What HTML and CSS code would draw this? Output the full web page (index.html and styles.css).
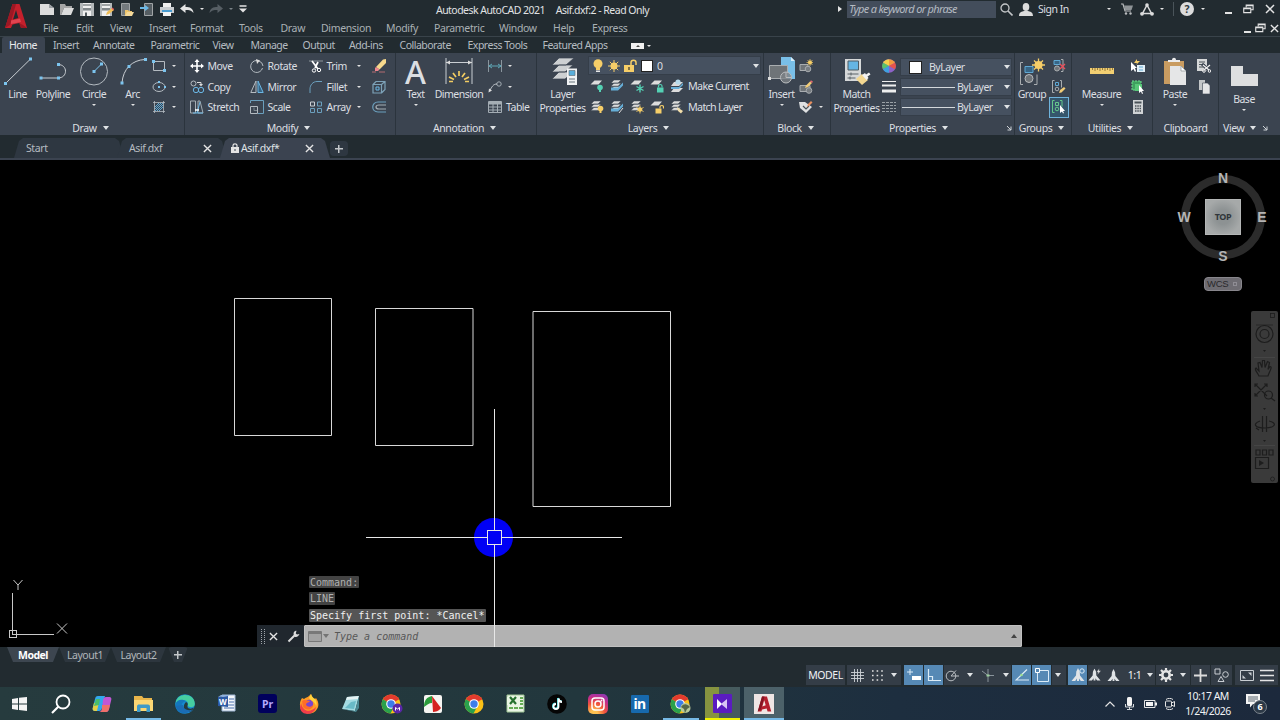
FILE: index.html
```html
<!DOCTYPE html>
<html lang="en">
<head>
    <meta charset="UTF-8">
    <meta name="viewport" content="width=device-width, initial-scale=1.0">
    <title>Autodesk AutoCAD 2021</title>
    <link rel="stylesheet" href="styles.css">
</head>
<body>
    <!-- shared icons -->
    <svg class="defs" width="0" height="0">
        <symbol id="layers" viewBox="0 0 14 14">
            <path d="M4 1h7L8 4H1zM4 4.200h7L8 7.200H1zM4 7.400h7L8 10.400H1z" fill="#dcdcdc" stroke="#3b4450" stroke-width=".5"/>
        </symbol>
        <symbol id="sheet" viewBox="0 0 14 14">
            <path d="M4.500 1.500H12L8.500 5.500H.5z" fill="#dcdcdc"/>
        </symbol>
        <symbol id="chrome" viewBox="0 0 20 20">
            <circle cx="10" cy="10" r="9.500" fill="#fbc116"/>
            <path d="M10 10L1.800 5.250A9.500 9.500 0 0 1 18.200 5.250z" fill="#e33b2e"/>
            <path d="M10 10L1.800 5.250A9.500 9.500 0 0 0 9.500 19.500L13.500 12z" fill="#2aa14c"/>
            <path d="M10 5.250H18.200L17 3.800H5z" fill="#e33b2e"/>
            <circle cx="10" cy="10" r="4.800" fill="#fff"/>
            <circle cx="10" cy="10" r="3.700" fill="#3d7de8"/>
        </symbol>
        <symbol id="scale" viewBox="0 0 14 14">
            <path d="M7 0l1.700 3.500.3 4L13.500 13H9.800L8 10.500V13H6v-2.500L4.200 13H.5L5 7.500l.3-4z" fill="#dfe3e6"/>
        </symbol>
        <symbol id="restore" viewBox="0 0 12 10">
            <path d="M3.500 3V.8h7.500v5H8.700M.8 4h7.700v5H.8z" fill="none" stroke="#e4e4e4" stroke-width="1.200"/>
            <path d="M1 4.600h7.500M4 1.300h7" stroke="#e4e4e4" stroke-width="1.200"/>
        </symbol>
        <symbol id="close" viewBox="0 0 10 10">
            <path d="M1 1l8 8M9 1L1 9" stroke="#e4e4e4" stroke-width="1.500"/>
        </symbol>
        <symbol id="launcher" viewBox="0 0 6 6">
            <path d="M1 1l4 4M5 1.500V5H1.500" fill="none" stroke="#d0d4d8"/>
        </symbol>
    </svg>

    <header class="header">
        <svg class="logo" width="22" height="26" viewBox="0 0 22 26">
            <path d="M7.500 1h7L22 25h-6l-1.500-5-7 1.500L6 25H0z" fill="#c5202c"/>
            <path d="M11 7l2.300 8L8 16.500z" fill="#222b30"/>
            <path d="M0 25L7.500 1H11L5 22zM14 20l4 2 4 3h-6z" fill="#9c1824"/>
            <path d="M6 17.500l9-2 1 3.500-10 2z" fill="#e04450"/>
        </svg>
        <div class="header-main">
            <div class="titlebar">
                <div class="quick">
                    <svg width="14" height="12" viewBox="0 0 14 12"><path d="M0 1h9l5 4v7H0z" fill="#dcdcdc"/><path d="M9 1v4h5" fill="#9a9ea2"/></svg>
                    <svg width="14" height="12" viewBox="0 0 14 12"><path d="M0 1h5l1 2h6v2H4l-3 7H0z" fill="#a6a6a6"/><path d="M4 5h10l-3 7H1z" fill="#dcdcdc"/></svg>
                    <svg width="14" height="13" viewBox="0 0 14 13"><path d="M0 0h14v13H0z" fill="#b4b8ba"/><path d="M3 0h8v5H3zM3 8h8v5H3z" fill="#f0f0f0"/><path d="M3 2h8M3 6h8" stroke="#50585c"/><path d="M5 9.500h2V13H5z" fill="#50585c"/></svg>
                    <svg width="14" height="13" viewBox="0 0 14 13"><path d="M0 0h12v13H0z" fill="#b4b8ba"/><path d="M2 0h8v5H2zM2 8h8v5H2z" fill="#f0f0f0"/><path d="M2 6h8M2 2h8" stroke="#50585c"/><path d="M6 12l1-3 5-4 2 2-5 4z" fill="#f0bf59"/><path d="M12 5l2 2" stroke="#d85d60" stroke-width="1.500"/></svg>
                    <svg width="14" height="13" viewBox="0 0 14 13"><path d="M1.500.5h8v12h-8z" fill="#747a7e" stroke="#a0a4a6"/><path d="M5 7h3l1 1h3v5H5z" fill="#edc46b"/><path d="M7 9h7l-2 4H5z" fill="#f4d99a"/></svg>
                    <svg width="14" height="13" viewBox="0 0 14 13"><path d="M4.500.5h8v12h-8z" fill="#555d62" stroke="#a0a4a6"/><path d="M0 4h5V2l4 3-4 3V6H0z" fill="#6bb7e5"/></svg>
                    <svg width="14" height="13" viewBox="0 0 14 13"><path d="M3 0h8v5H3z" fill="#f0f0f0"/><path d="M0 4h14v6H0z" fill="#c9cdd0"/><path d="M2 7h10v2H2z" fill="#4a9cd0"/><path d="M3 9h8v4H3z" fill="#f4f4f4"/></svg>
                    <svg width="14" height="10" viewBox="0 0 14 10"><path d="M0 4.500L5.500 0v3c4.500 0 7.500 1 8 6-2-2.500-4-3-8-3v3z" fill="#e4e4e4"/></svg>
                    <i class="caret"></i>
                    <svg width="14" height="10" viewBox="0 0 14 10"><path d="M14 4.500L8.500 0v3C4 3 1 4 .5 9c2-2.500 4-3 8-3v3z" fill="#565e64"/></svg>
                    <i class="caret dim"></i>
                    <svg width="8" height="8" viewBox="0 0 8 8"><path d="M.5 1h7" stroke="#e4e4e4" stroke-width="1.500"/><path d="M0 3.500h8L4 7.500z" fill="#e4e4e4"/></svg>
                </div>
                <div class="doc-title"><span>Autodesk AutoCAD 2021</span><span>Asif.dxf:2 - Read Only</span></div>
                <i class="arrow-right"></i>
                <div class="search">Type a keyword or phrase</div>
                <div class="account">
                    <svg width="13" height="13" viewBox="0 0 13 13"><circle cx="5" cy="5" r="4" fill="none" stroke="#c3c6c8" stroke-width="1.300"/><path d="M8 8l4.500 4.500" stroke="#c3c6c8" stroke-width="1.600"/></svg>
                    <svg width="14" height="13" viewBox="0 0 14 13"><ellipse cx="7" cy="4" rx="3.300" ry="4" fill="#dcdcdc"/><path d="M0 13c0-4 3-4.500 5-5h4c2 .5 5 1 5 5z" fill="#dcdcdc"/></svg>
                    <span>Sign In</span>
                </div>
                <div class="services">
                    <i class="caret"></i>
                    <svg width="12" height="12" viewBox="0 0 12 12"><path d="M0 1h2l2 7h6" fill="none" stroke="#b9bcbe" stroke-width="1.200"/><path d="M3 2.500h9L10.500 7H4z" fill="#8e9396"/><circle cx="5" cy="10.500" r="1.200" fill="#b9bcbe"/><circle cx="9.500" cy="10.500" r="1.200" fill="#b9bcbe"/></svg>
                    <svg width="14" height="13" viewBox="0 0 14 13"><path d="M7 2L2.500 10.500h9zM7 2l4.500 8.500" fill="none" stroke="#dcdcdc" stroke-width="1.500"/><circle cx="7" cy="2" r="1.800" fill="#dcdcdc"/><circle cx="2" cy="10.800" r="1.900" fill="#dcdcdc"/><circle cx="12" cy="10.800" r="1.900" fill="#dcdcdc"/></svg>
                    <i class="caret"></i>
                    <span class="vline"></span>
                    <span class="help">?</span>
                    <i class="caret"></i>
                </div>
                <div class="window-buttons">
                    <i class="minimize"></i>
                    <svg width="11" height="10"><use href="#restore"/></svg>
                    <svg width="10" height="10"><use href="#close"/></svg>
                </div>
            </div>
            <div class="menubar">
                <nav class="menu">
                    <span>File</span><span>Edit</span><span>View</span><span>Insert</span><span>Format</span><span>Tools</span><span>Draw</span><span>Dimension</span><span>Modify</span><span>Parametric</span><span>Window</span><span>Help</span><span>Express</span>
                </nav>
                <div class="doc-buttons">
                    <i class="minimize"></i>
                    <svg width="11" height="10"><use href="#restore"/></svg>
                    <svg width="9" height="9"><use href="#close"/></svg>
                </div>
            </div>
        </div>
    </header>

    <nav class="ribbon-tabs">
        <span class="active">Home</span><span>Insert</span><span>Annotate</span><span>Parametric</span><span>View</span><span>Manage</span><span>Output</span><span>Add-ins</span><span>Collaborate</span><span>Express Tools</span><span>Featured Apps</span>
        <div class="ribbon-toggle"><b><i class="caret up"></i></b><i class="caret"></i></div>
    </nav>

    <main class="ribbon">
        <section class="panel draw">
            <div class="panel-body">
                <div class="big">
                    <svg width="30" height="30" viewBox="0 0 30 30"><path d="M2.500 26.500L27.500 2" stroke="#c9ced3"/><path d="M1 25h3v3H1zM26 .5h3v3h-3z" fill="#7cc4ee"/></svg>
                    <label>Line</label>
                </div>
                <div class="big">
                    <svg width="30" height="30" viewBox="0 0 30 30"><path d="M3 21h17c10 0 10-13.500 0-13.500" fill="none" stroke="#c9ced3"/><path d="M1.500 19.500h3v3h-3zM19 19.500h3v3h-3zM19 6h3v3h-3z" fill="#7cc4ee"/></svg>
                    <label>Polyline</label>
                </div>
                <div class="big">
                    <svg width="30" height="30" viewBox="0 0 30 30"><circle cx="15" cy="14.500" r="13.500" fill="none" stroke="#b4bbc1"/><path d="M15 14.500l7.500-7.500" stroke="#7cc4ee"/><path d="M13.500 13h3v3h-3zM21 5.500h3v3h-3z" fill="#7cc4ee"/></svg>
                    <label>Circle</label><i class="caret"></i>
                </div>
                <div class="big">
                    <svg width="30" height="30" viewBox="0 0 30 30"><path d="M4 26C5 12 14 3 27 2.500" fill="none" stroke="#c9ced3"/><path d="M2.500 24.500h3v3h-3zM9.500 8h3v3h-3zM26 1h3v3h-3z" fill="#7cc4ee"/></svg>
                    <label>Arc</label><i class="caret"></i>
                </div>
                <div class="small-col">
                    <div class="cmd"><svg width="14" height="12" viewBox="0 0 14 12"><path d="M1.500 1.500h11v9h-11z" fill="none" stroke="#b4bbc1"/><path d="M0 0h3v3H0zM11 9h3v3h-3z" fill="#7cc4ee"/></svg><i class="caret"></i></div>
                    <div class="cmd"><svg width="14" height="12" viewBox="0 0 14 12"><ellipse cx="7" cy="6" rx="6" ry="4.500" fill="none" stroke="#b4bbc1"/><path d="M6 5h2v2H6zM6 0h2v2H6zM12 5h2v2h-2z" fill="#7cc4ee"/></svg><i class="caret"></i></div>
                    <div class="cmd"><svg width="14" height="14" viewBox="0 0 14 14"><path d="M2.500 1v12M11.500 1v12M1 2.500h12M1 11.500h12" stroke="#b4bbc1" stroke-width=".8"/><path d="M3 7l4-4M3 11l8-8M7 11l4-4M3 9l6-6M5 11l6-6" stroke="#5fa9d4"/></svg><i class="caret"></i></div>
                </div>
            </div>
            <div class="panel-title">Draw<i class="tri"></i></div>
        </section>

        <section class="panel modify">
            <div class="panel-body">
                <div class="small-col">
                    <div class="cmd"><svg width="14" height="14" viewBox="0 0 14 14"><path d="M7 1v12M1 7h12" stroke="#fff" stroke-width="1.600"/><path d="M7 0l2.500 3h-5zM7 14l2.500-3h-5zM0 7l3-2.500v5zM14 7l-3-2.500v5z" fill="#fff"/></svg>Move</div>
                    <div class="cmd"><svg width="14" height="14" viewBox="0 0 14 14"><circle cx="3.500" cy="3.500" r="2.500" fill="none" stroke="#b4bbc1"/><path d="M7 2.500h4v2" fill="none" stroke="#dcdcdc"/><path d="M9 4h4l-2 2.500z" fill="#dcdcdc"/><circle cx="6" cy="10" r="2.700" fill="none" stroke="#6bb7e5"/><circle cx="11" cy="10" r="2.700" fill="none" stroke="#6bb7e5"/></svg>Copy</div>
                    <div class="cmd"><svg width="14" height="14" viewBox="0 0 14 14"><path d="M.5 1h5v12h-5zM8 13V1h2l3 12z" fill="none" stroke="#a4adb4"/><path d="M3 13h10M7 13L10 2" stroke="#6bb7e5"/><path d="M5 10h4" stroke="#fff" stroke-width="1.500"/></svg>Stretch</div>
                </div>
                <div class="small-col">
                    <div class="cmd"><svg width="14" height="14" viewBox="0 0 14 14"><path d="M7 1.500a6 6 0 1 0 5.500 7.500M9 2a6 6 0 0 1 4 5" fill="none" stroke="#b4bbc1"/><path d="M6 0l4 1.500L7 5z" fill="#dcdcdc"/></svg>Rotate</div>
                    <div class="cmd"><svg width="14" height="14" viewBox="0 0 14 14"><path d="M6 1v11.500H.8z" fill="none" stroke="#b4bbc1"/><path d="M8 1v11.500h5.200z" fill="#386585" stroke="#6bb7e5"/></svg>Mirror</div>
                    <div class="cmd"><svg width="14" height="14" viewBox="0 0 14 14"><path d="M.5 3V.5h13v13H8" fill="none" stroke="#6b9fbd"/><path d="M.5 6.500h7v7h-7z" fill="none" stroke="#b4bbc1"/><path d="M4 7.500v3h3" fill="none" stroke="#7d8890"/></svg>Scale</div>
                </div>
                <div class="small-col wide">
                    <div class="cmd"><svg width="14" height="14" viewBox="0 0 14 14"><path d="M0 2h14" stroke="#8d959b"/><path d="M3 2l6 8M9 3l-3 6" stroke="#fff" stroke-width="1.700"/><circle cx="5" cy="11.500" r="1.700" fill="none" stroke="#fff"/><circle cx="10" cy="11" r="1.700" fill="none" stroke="#fff"/></svg>Trim<i class="caret"></i></div>
                    <div class="cmd"><svg width="14" height="14" viewBox="0 0 14 14"><path d="M1 13V9c0-4 3-7.500 7-7.500h5" fill="none" stroke="#6b9fbd"/></svg>Fillet<i class="caret"></i></div>
                    <div class="cmd"><svg width="14" height="14" viewBox="0 0 14 14"><path d="M8.500 2h4v4h-4zM1.500 8.500h4v4h-4zM8.500 8.500h4v4h-4z" fill="none" stroke="#6b9fbd"/><path d="M1.500 2h4v4h-4z" fill="none" stroke="#c9ced3"/></svg>Array<i class="caret"></i></div>
                </div>
                <div class="small-col">
                    <div class="cmd"><svg width="14" height="14" viewBox="0 0 14 14"><path d="M4 8l7-7.500L14 0v4L7.500 10.500z" fill="#f7d98c"/><path d="M4 8l3.500 2.500L6 12H3V9z" fill="#ef8790"/><path d="M0 13h4M7 13h6" stroke="#b36a70"/></svg></div>
                    <div class="cmd"><svg width="14" height="14" viewBox="0 0 14 14"><path d="M1 4.500h8.500V13H1zM1 4.500l3-3h9v8L9.500 13M9.500 4.500l3.500-3" fill="none" stroke="#7da2b8" stroke-width="1.200"/><path d="M4 7h3v3H4z" fill="none" stroke="#6bb7e5"/></svg></div>
                    <div class="cmd"><svg width="14" height="12" viewBox="0 0 14 12"><path d="M14 1H6C-1 1-1 11 6 11h8" fill="none" stroke="#6b9fbd" stroke-width="1.200"/><path d="M14 4H7C3 4 3 8 7 8h7" fill="none" stroke="#a4adb4" stroke-width="1.200"/></svg></div>
                </div>
            </div>
            <div class="panel-title">Modify<i class="tri"></i></div>
        </section>

        <section class="panel annotation">
            <div class="panel-body">
                <div class="big"><span class="glyph">A</span><label>Text</label><i class="caret"></i></div>
                <div class="big">
                    <svg width="30" height="30" viewBox="0 0 30 30"><path d="M2 1v26M28 1v26M2 5.500h26" stroke="#c9ced3"/><path d="M2 5.500l4-2v4zM28 5.500l-4-2v4z" fill="#dcdcdc"/><path d="M15 14v5M9 16l3 4M21 16l-3 4M5 20l5 2.500M25 20l-5 2.500M5 24.500h4M21 24.500h4" stroke="#f2cc62" stroke-width="1.700"/></svg>
                    <label>Dimension</label>
                </div>
                <div class="small-col">
                    <div class="cmd"><svg width="14" height="12" viewBox="0 0 14 12"><path d="M.5 0v12M13.500 0v12" stroke="#8a969e"/><path d="M1 6h12M4 4L1 6l3 2M10 4l3 2-3 2" fill="none" stroke="#5fa9b8"/></svg><i class="caret"></i></div>
                    <div class="cmd"><svg width="14" height="12" viewBox="0 0 14 12"><circle cx="11" cy="3" r="2.200" fill="none" stroke="#a4adb4"/><path d="M9 3C5 3 4 6 2 9" fill="none" stroke="#c9ced3"/><path d="M.5 11.500l.5-4 3 2z" fill="#dcdcdc"/></svg><i class="caret"></i></div>
                    <div class="cmd"><svg width="14" height="12" viewBox="0 0 14 12"><path d="M.5.5h13v11H.5zM.5 3h13M.5 6h13M.5 9h13M5 3v8.500M9.500 3v8.500" fill="none" stroke="#a4adb4"/><path d="M1 1h12v2H1z" fill="#a4adb4"/></svg>Table</div>
                </div>
            </div>
            <div class="panel-title">Annotation<i class="tri"></i></div>
        </section>

        <section class="panel layer">
            <div class="panel-body">
                <div class="big">
                    <svg width="30" height="30" viewBox="0 0 30 30"><path d="M11 1h15l-8 7H4zM11 8h14l-8 7H4zM11 15h14l-8 7H4z" fill="#cdd0d2" stroke="#3b4450" stroke-width=".7"/><path d="M19 11.500h10V28H19z" fill="#f0f2f3"/><path d="M21 13.500h6v5h-6z" fill="#58aeda" stroke="#66747c" stroke-width=".7"/><path d="M21 22h6M21 25h6" stroke="#66747c"/></svg>
                    <label>Layer<br>Properties</label>
                </div>
                <div class="layer-tools">
                    <div class="combo layer-combo">
                        <svg width="10" height="14" viewBox="0 0 10 14"><circle cx="5" cy="4.800" r="4.500" fill="#f6ce68"/><path d="M3 9h4v2H3z" fill="#f6ce68"/><path d="M3 11.500h4V13H3z" fill="#e8e8e8"/></svg>
                        <svg width="14" height="14" viewBox="0 0 14 14"><circle cx="7" cy="7" r="3.500" fill="#f6ce68"/><path d="M7 1v12M1 7h12M2.800 2.800l8.400 8.400M11.200 2.800l-8.400 8.400" stroke="#f6ce68"/></svg>
                        <svg width="13" height="14" viewBox="0 0 13 14"><path d="M0 6h10v7H0z" fill="#f6ce68"/><path d="M7 6V3.500C7 .5 12 .5 12 3.500V6" fill="none" stroke="#f6ce68" stroke-width="1.500"/><path d="M5 8v3" stroke="#5a5034" stroke-width="1.500"/></svg>
                        <b class="swatch"></b><span>0</span><i class="tri"></i>
                    </div>
                    <div class="layer-row">
                        <svg width="14" height="14" viewBox="0 0 14 14"><use href="#sheet"/><circle cx="10" cy="8.500" r="2.800" fill="#54d1b4"/><path d="M9 11h2v2H9z" fill="#54d1b4"/></svg>
                        <svg width="14" height="14" viewBox="0 0 14 14"><use href="#layers"/><path d="M1 8.500h7l5-5v3l-5 5H1z" fill="#67afd8"/></svg>
                        <svg width="14" height="14" viewBox="0 0 14 14"><use href="#sheet"/><path d="M10 5.500v8M6.500 7.500l7 4M13.500 7.500l-7 4" stroke="#54d1b4" stroke-width="1.400"/></svg>
                        <svg width="14" height="14" viewBox="0 0 14 14"><use href="#sheet"/><path d="M7 8.500h6.500v5H7z" fill="#54d1b4"/><path d="M8.500 8.500V7c0-2 3.500-2 3.500 0v1.500" fill="none" stroke="#54d1b4" stroke-width="1.200"/></svg>
                        <svg width="14" height="14" viewBox="0 0 14 14"><path d="M4 3h9L9 7H1zM4 9h9l-4 4H1z" fill="#dcdcdc"/><path d="M1 8h8l4-4v2L9 10H1z" fill="#67afd8"/><circle cx="8" cy="3" r="2.600" fill="#b7dced"/></svg>
                        <span>Make Current</span>
                    </div>
                    <div class="layer-row">
                        <svg width="14" height="14" viewBox="0 0 14 14"><use href="#layers"/><circle cx="10.500" cy="8.500" r="2.800" fill="#f6ce68"/><path d="M9.500 11h2v2h-2z" fill="#f6ce68"/></svg>
                        <svg width="14" height="14" viewBox="0 0 14 14"><use href="#layers"/><path d="M1 8.500h7l5-5v3l-5 5H1z" fill="#67afd8"/><path d="M9 13l4-5" stroke="#dcdcdc"/></svg>
                        <svg width="14" height="14" viewBox="0 0 14 14"><use href="#layers"/><circle cx="10" cy="9.500" r="2.200" fill="#f6ce68"/><path d="M10 5.500v8M6.500 7.500l7 4M13.500 7.500l-7 4" stroke="#f6ce68" stroke-width=".9"/></svg>
                        <svg width="14" height="14" viewBox="0 0 14 14"><use href="#sheet"/><path d="M5.500 8.500h6v5h-6z" fill="#f6ce68"/><path d="M10 8.500V7c0-2 3.500-2 3.500 0v1.500" fill="none" stroke="#f6ce68" stroke-width="1.200"/></svg>
                        <svg width="14" height="14" viewBox="0 0 14 14"><use href="#layers"/><path d="M7 7l6 4-2 2.500L8 11z" fill="#f3dfaa"/></svg>
                        <span>Match Layer</span>
                    </div>
                </div>
            </div>
            <div class="panel-title">Layers<i class="tri"></i></div>
        </section>

        <section class="panel block">
            <div class="panel-body">
                <div class="big">
                    <svg width="30" height="30" viewBox="0 0 30 30"><path d="M14 0h10l4 4v18H14z" fill="#79bfe8"/><path d="M24 0v4h4z" fill="#d9eefa"/><path d="M2.500 8.500h18v13h-18z" fill="#6f7478" stroke="#a9adb0"/><circle cx="19" cy="20.500" r="5.500" fill="#7d8286" fill-opacity=".8" stroke="#b9bcbe"/><path d="M19 15v5.500h5.500" fill="none" stroke="#b9bcbe"/><path d="M1 20h3v3H1z" fill="#dcdcdc"/></svg>
                    <label>Insert</label><i class="caret"></i>
                </div>
                <div class="small-col">
                    <div class="cmd"><svg width="14" height="14" viewBox="0 0 14 14"><path d="M1 5.500h8v6H1z" fill="#6f7478" stroke="#a9adb0"/><circle cx="9" cy="10" r="2.800" fill="#777c80" stroke="#a9adb0"/><circle cx="11" cy="3.500" r="2" fill="#f6ce68"/><path d="M11 0v7M7.500 3.500h7M8.500 1l5 5M13.500 1l-5 5" stroke="#f6ce68" stroke-width=".7"/></svg></div>
                    <div class="cmd"><svg width="14" height="14" viewBox="0 0 14 14"><path d="M1 5.500h10v6H1z" fill="#6f7478" stroke="#a9adb0"/><circle cx="10" cy="10.500" r="2.800" fill="#777c80" stroke="#a9adb0"/><path d="M6 8l1-2.500L11 1.500l2 1.500-4 4z" fill="#f2cc76"/><path d="M11 1.500l1-1.200 2 1.500L13 3z" fill="#e06a70"/></svg></div>
                    <div class="cmd"><svg width="14" height="14" viewBox="0 0 14 14"><path d="M0 2h6l7 5-6 6-6-5z" fill="#dfe1e2"/><path d="M4 6l3 3 3-3" fill="none" stroke="#4a5258" stroke-width="1.200"/><path d="M8 7l1-3 3-3 1.500 1.500-3 3z" fill="#e89060"/></svg><i class="caret"></i></div>
                </div>
            </div>
            <div class="panel-title">Block<i class="tri"></i></div>
        </section>

        <section class="panel props">
            <div class="panel-body">
                <div class="big">
                    <svg width="30" height="30" viewBox="0 0 30 30"><path d="M3 2h16v22H3z" fill="#d6d8d9"/><path d="M6 4h10.500v9H6z" fill="#65b5e3" stroke="#4f5c64"/><path d="M5.500 17h11M5.500 21h8M9 15.500v3M8 19.500v3" stroke="#5a6268"/><path d="M14 22l6-5 6 6-6 5z" fill="#f3d791"/><path d="M20 18l3-2 1 1.500 3-2 1.500 2-3 2 1 1.500-2 2z" fill="#f2f2f2"/></svg>
                    <label>Match<br>Properties</label>
                </div>
                <div class="small-col">
                    <div class="cmd"><svg width="14" height="14" viewBox="0 0 14 14"><circle cx="7" cy="7" r="6.800" fill="#8d63c8"/><path d="M7 7V.2a6.800 6.800 0 0 1 6 3.600z" fill="#f39a3e"/><path d="M7 7V.2a6.800 6.800 0 0 0-6 3.600z" fill="#f3d04c"/><path d="M7 7L1 3.800a6.800 6.800 0 0 0 0 6.400z" fill="#58c46a"/><path d="M7 7l-6 3.200A6.800 6.800 0 0 0 7 13.800z" fill="#3fa0e0"/><path d="M7 7l6-3.200a6.800 6.800 0 0 1 0 6.400z" fill="#e8544a"/></svg></div>
                    <div class="cmd"><svg width="14" height="14" viewBox="0 0 14 14"><path d="M0 1.500h14" stroke="#eee"/><path d="M0 5.500h14" stroke="#eee" stroke-width="2"/><path d="M0 11h14" stroke="#eee" stroke-width="3"/></svg></div>
                    <div class="cmd"><svg width="14" height="12" viewBox="0 0 14 12"><path d="M0 1.500h14M0 4.500h14M0 7.500h14M0 10.500h14" stroke="#9aa1a6" stroke-dasharray="3 1"/></svg></div>
                </div>
                <div class="combos">
                    <div class="combo"><b class="swatch"></b><span>ByLayer</span><i class="tri"></i></div>
                    <div class="combo"><hr><span>ByLayer</span><i class="tri"></i></div>
                    <div class="combo"><hr><span>ByLayer</span><i class="tri"></i></div>
                </div>
            </div>
            <div class="panel-title">Properties<i class="tri"></i><svg class="launcher" width="6" height="6"><use href="#launcher"/></svg></div>
        </section>

        <section class="panel groups">
            <div class="panel-body">
                <div class="big">
                    <svg width="30" height="30" viewBox="0 0 30 30"><path d="M6 5.500H3.500v22H6M17 27.500h3v-10" fill="none" stroke="#a9adb0"/><path d="M8 9.500h8v6H8z" fill="#386585" stroke="#5fa9d4"/><circle cx="12" cy="21.500" r="4" fill="#6f7478" stroke="#b9bcbe"/><circle cx="21.500" cy="8" r="4" fill="#f6ce68"/><path d="M21.500 1.500v13M15 8h13M17 3.500l9 9M26 3.500l-9 9" stroke="#f6ce68" stroke-width="1.300"/></svg>
                    <label>Group</label>
                </div>
                <div class="small-col">
                    <div class="cmd"><svg width="14" height="14" viewBox="0 0 14 14"><path d="M2 1.500h6v4H2z" fill="#386585" stroke="#5fa9d4"/><circle cx="5" cy="9.500" r="2.500" fill="#6f7478" stroke="#a9adb0"/><path d="M9 .5h2v12H9" fill="none" stroke="#a9adb0"/><path d="M8 5l5 5M13 5l-5 5" stroke="#e8505c" stroke-width="1.400"/></svg></div>
                    <div class="cmd"><svg width="14" height="14" viewBox="0 0 14 14"><path d="M2.500.5H.5v12h2M8 .5h1.500v7" fill="none" stroke="#a9adb0"/><path d="M3.500 2.500h3v3h-3z" fill="none" stroke="#5fa9d4"/><circle cx="5" cy="9" r="1.800" fill="none" stroke="#a9adb0"/><path d="M7 13l1-3 4-3 1.500 1.500-4 4z" fill="#f2cc76"/></svg></div>
                    <div class="cmd on"><svg width="14" height="14" viewBox="0 0 14 14"><path d="M2.500.5H.5v12h2M8 .5h2v6" fill="none" stroke="#65c98c"/><path d="M3.500 2.500h3v3h-3z" fill="none" stroke="#65c98c"/><circle cx="5" cy="9" r="1.800" fill="none" stroke="#65c98c"/><path d="M8 5v8l2-1.500 1 2 1-.5-1-2h2z" fill="#fff"/></svg></div>
                </div>
            </div>
            <div class="panel-title">Groups<i class="tri"></i></div>
        </section>

        <section class="panel utilities">
            <div class="panel-body">
                <div class="big">
                    <svg width="30" height="30" viewBox="0 0 30 30"><path d="M3 11h24v6H3z" fill="#f2cf72"/><path d="M5.500 11v2M8 11v3M10.500 11v2M13 11v3M15.500 11v2M18 11v3M20.500 11v2M23 11v3M25.500 11v2" stroke="#806a34" stroke-width=".8"/></svg>
                    <label>Measure</label><i class="caret"></i>
                </div>
                <div class="small-col">
                    <div class="cmd"><svg width="14" height="14" viewBox="0 0 14 14"><path d="M6 6h8v7H6z" fill="#e3f0f8"/><path d="M8 8h4M8 11h4" stroke="#5fa9d4"/><path d="M0 3v9l2.500-2L4 13l1-1-1-3h2z" fill="#fff"/><path d="M6 0L3 4h3L5 6l4-4H6z" fill="#f6ce68"/></svg></div>
                    <div class="cmd"><svg width="14" height="14" viewBox="0 0 14 14"><path d="M1 1h9v9H1z" fill="#3fa15f" stroke="#6fe08f" stroke-dasharray="2 1"/><path d="M4 4h7v7H4z" fill="#58c878"/><path d="M8 5v8l2-1.500 1 2.500 1-.5-1-2.500h2z" fill="#fff"/></svg></div>
                    <div class="cmd"><svg width="14" height="14" viewBox="0 0 14 14"><path d="M2 0h10v14H2z" fill="#d0d3d5"/><path d="M3.500 1.500h7v2h-7z" fill="#4a5258"/><path d="M4 6h6M4 8.500h6M4 11h6" stroke="#4a5258" stroke-width="1.400" stroke-dasharray="1.500 .8"/></svg></div>
                </div>
            </div>
            <div class="panel-title">Utilities<i class="tri"></i></div>
        </section>

        <section class="panel clipboard">
            <div class="panel-body">
                <div class="big">
                    <svg width="30" height="30" viewBox="0 0 30 30"><path d="M4 4h20v23H4z" fill="#c99c61"/><path d="M8 5V3h4c0-3 4-3 4 0h4v2z" fill="#ececec"/><path d="M10 9h11l5 5v14H10z" fill="#e5e6e7"/><path d="M21 9v5h5z" fill="#fff" stroke="#8e9396" stroke-width=".7"/></svg>
                    <label>Paste</label><i class="caret"></i>
                </div>
                <div class="small-col">
                    <div class="cmd"><svg width="14" height="14" viewBox="0 0 14 14"><path d="M0 0h10v12H0z" fill="#d6d8d9"/><path d="M2 3h6M2 5.500h6M2 8h5" stroke="#4a5258"/><path d="M5 5l8 7M13 6l-6 6" stroke="#3b4450" stroke-width="3"/><path d="M6 6l6 5M13 6l-6 5" stroke="#f0f0f0" stroke-width="1.200"/><circle cx="7" cy="12" r="1.300" fill="none" stroke="#f0f0f0"/><circle cx="12.500" cy="12" r="1.300" fill="none" stroke="#f0f0f0"/></svg></div>
                    <div class="cmd"><svg width="14" height="14" viewBox="0 0 14 14"><path d="M2 0h6v10H2z" fill="#c3c6c8"/><path d="M5.500 3h5L13 5.500V14H5.500z" fill="#e5e6e7" stroke="#3b4450" stroke-width=".6"/></svg></div>
                </div>
            </div>
            <div class="panel-title">Clipboard</div>
        </section>

        <section class="panel view">
            <div class="panel-body">
                <div class="big">
                    <svg width="30" height="30" viewBox="0 0 30 30"><path d="M2 4h12v8h15v12H2z" fill="#dedfe0"/></svg>
                    <label>Base</label><i class="caret"></i>
                </div>
            </div>
            <div class="panel-title">View<i class="tri"></i><svg class="launcher" width="6" height="6"><use href="#launcher"/></svg></div>
        </section>
    </main>

    <div class="file-tabs">
        <div class="file-tab"><span>Start</span></div>
        <div class="file-tab"><span>Asif.dxf</span><svg width="9" height="9"><use href="#close"/></svg></div>
        <div class="file-tab active">
            <svg width="8" height="10" viewBox="0 0 8 10"><path d="M0 4h8v6H0z" fill="#e4e4e4"/><path d="M2 4V2.500c0-2.200 4-2.200 4 0V4" fill="none" stroke="#e4e4e4" stroke-width="1.200"/><path d="M4 6v2" stroke="#3b4450"/></svg>
            <span>Asif.dxf*</span><svg width="9" height="9"><use href="#close"/></svg>
        </div>
        <div class="add-tab"></div>
    </div>

    <div class="canvas">
        <div class="history">
            <span>Command:</span>
            <span>LINE</span>
            <span class="last">Specify first point: *Cancel*</span>
        </div>
        <div class="command-line">
            <div class="command-tools">
                <i class="grip"></i>
                <svg width="9" height="9"><use href="#close"/></svg>
                <svg width="13" height="13" viewBox="0 0 13 13"><path d="M1.500 11.500L8 5" stroke="#dcdcdc" stroke-width="2"/><path d="M9.500.8C7 .8 6 3 7 5.500s4 2 5.500-1.500L10 4.500 8.800 3.500z" fill="#dcdcdc"/></svg>
            </div>
            <div class="command-input">
                <svg width="14" height="11" viewBox="0 0 14 11"><path d="M.5.5h13v10H.5z" fill="#a2a2a2" stroke="#787878"/><path d="M1 2h12" stroke="#787878" stroke-width="2"/></svg>
                <i class="tri"></i><em>Type a command</em><i class="tri up"></i>
            </div>
        </div>
        <svg class="drawing" width="1280" height="487" viewBox="0 0 1280 487">
            <g fill="none" stroke="#d8d8d8">
                <path d="M234.500 138.500h97v137h-97z"/>
                <path d="M375.500 148.500H473v137h-97.500z"/>
                <path d="M533 151.500h137.500v195H533z"/>
            </g>
            <circle cx="493.500" cy="377.500" r="19.500" fill="#0000f5"/>
            <g fill="none" stroke="#e8e8e8" shape-rendering="crispEdges">
                <path d="M494.500 249v121M494.500 385v102M366 377.500h121M502 377.500h120"/>
                <path d="M487.500 370.500h14v14h-14z"/>
            </g>
            <g fill="none" stroke="#c8c8c8">
                <path d="M12.500 433v41.500H54M9.500 470.500h7v7h-7z" shape-rendering="crispEdges"/>
                <path d="M13.500 420l4.500 5 4.500-5M18 425v5M57 463.500l10 10M67 463.500l-10 10"/>
            </g>
        </svg>
        <div class="viewcube">
            <b>N</b><b>W</b><span>TOP</span><b>E</b><b>S</b>
        </div>
        <div class="wcs">WCS<i></i></div>
        <div class="navbar">
            <svg width="27" height="172" viewBox="0 0 27 172" fill="none" stroke="#1d1d1d" stroke-width="1.200">
                <rect x="19.500" y="2.500" width="4" height="4" stroke-width=".8"/>
                <circle cx="13.500" cy="23" r="8.500"/><circle cx="13.500" cy="23" r="4.500"/><path d="M5 14h17" stroke-width=".6"/>
                <path d="M8 65c-2-4-5-7-3-8l3 3-1-8 2-.5 2 5 .5-7h2l.5 7 2.500-6 2 1-1.500 7 2-3c3 0-1 6-2 9.500z"/>
                <path d="M4 73l12 12M16 73L4 85M4 76v-3h3M13 73h3v3M4 82v3h3"/><circle cx="17.500" cy="84" r="4"/><path d="M20 87l4 3"/>
                <path d="M11.500 105v16M15.500 105v16M9 110c-8 3-5 7 5 7s13-5 4-7M5 117l3 2"/>
                <path d="M5 139h4v5H5zM11.500 139h4v5h-4zM18 139h4v5h-4zM4.500 146.500h13v11h-13z"/>
                <path d="M8 149l5 3-5 3zM12 39h3l-1.500 2zM12 97h3l-1.500 2zM12 129h3l-1.500 2z" fill="#1d1d1d" stroke="none"/>
                <circle cx="21.500" cy="168" r="2" stroke-width=".8"/>
                <path d="M3 46.500h21M3 134.500h21" stroke="#484848" stroke-width=".8"/>
            </svg>
        </div>
    </div>

    <div class="layout-tabs">
        <span class="active">Model</span><span>Layout1</span><span>Layout2</span><span class="add-tab"></span>
    </div>

    <div class="statusbar">
        <span class="cell model">MODEL</span>
        <span class="cell grid">
            <svg width="13" height="13" viewBox="0 0 13 13"><path d="M3.500 0v13M6.500 0v13M9.500 0v13M0 3.500h13M0 6.500h13M0 9.500h13" stroke="#cfd4d8" stroke-width=".9"/></svg>
            <svg width="11" height="11" viewBox="0 0 11 11"><path d="M0 1h11M0 5.500h11M0 10h11" stroke="#e4e4e4" stroke-width="1.600" stroke-dasharray="1.600 3"/></svg>
            <i class="tri"></i>
        </span>
        <span class="cell on"><svg width="14" height="12" viewBox="0 0 14 12"><path d="M3 0v6M0 3h6" stroke="#dcecf7"/><path d="M5 7h9v4H5z" fill="#fff"/></svg></span>
        <span class="cell on"><svg width="14" height="13" viewBox="0 0 14 13"><path d="M1.500 0v11.500H14M1.500 7.500h4v4" fill="none" stroke="#dcecf7" stroke-width="1.200"/></svg></span>
        <span class="cell polar">
            <svg width="14" height="13" viewBox="0 0 14 13"><circle cx="6" cy="7" r="4.800" fill="none" stroke="#b9bec3"/><path d="M6 7h8M6 7l5-5.500" stroke="#b9bec3"/></svg><i class="tri"></i>
            <svg width="14" height="13" viewBox="0 0 14 13"><path d="M1 2l6 4.500M7 0v13M7 6.500h6" fill="none" stroke="#8a949c"/><path d="M5.500 5.500h3v2h-3z" fill="#9ccf9f"/></svg><i class="tri"></i>
        </span>
        <span class="cell on"><svg width="14" height="12" viewBox="0 0 14 12"><path d="M12 .5L1 11h13" fill="none" stroke="#dcecf7" stroke-width="1.200"/><circle cx="6.500" cy="6" r="1.300" fill="#9ce08f"/></svg></span>
        <span class="cell on"><svg width="14" height="14" viewBox="0 0 14 14"><path d="M5 2.500h8.500v11h-11V5" fill="none" stroke="#dcecf7"/><path d="M.5.5h4v4h-4z" fill="none" stroke="#fff"/></svg></span>
        <span class="cell osnap"><i class="tri"></i></span>
        <span class="cell on"><svg width="14" height="14" viewBox="0 0 14 14"><use href="#scale"/><circle cx="11" cy="3" r="2.200" fill="none" stroke="#dcecf7"/></svg></span>
        <span class="cell annoscale">
            <svg width="13" height="14" viewBox="0 0 14 14"><use href="#scale"/><path d="M12 0L9 4h2l-1 3 4-4.500h-2z" fill="#e4e4e4" stroke="#3b4450" stroke-width=".4"/></svg>
            <svg width="13" height="13" viewBox="0 0 14 14"><use href="#scale"/></svg>
            <span>1:1</span><i class="tri"></i>
        </span>
        <span class="cell gear">
            <svg width="14" height="14" viewBox="0 0 14 14"><circle cx="7" cy="7" r="3.700" fill="none" stroke="#e4e4e4" stroke-width="2.600"/><path d="M7 0v2.500M7 11.500V14M0 7h2.500M11.500 7H14M2 2l2 2M10 10l2 2M12 2l-2 2M4 10l-2 2" stroke="#e4e4e4" stroke-width="2.200"/></svg>
            <i class="tri"></i>
        </span>
        <span class="cell plus"><svg width="13" height="13" viewBox="0 0 13 13"><path d="M6.500 0v13M0 6.500h13" stroke="#dcdcdc" stroke-width="1.800"/></svg></span>
        <span class="cell shapes"><svg width="15" height="14" viewBox="0 0 15 14"><path d="M1 1h5v5H1zM7 8.500l3 5H4z" fill="none" stroke="#c9ced3"/><circle cx="11.500" cy="6.500" r="2.800" fill="none" stroke="#c9ced3"/></svg></span>
        <span class="cell custom">
            <svg width="14" height="11" viewBox="0 0 14 11"><path d="M.5.5h13v10H.5z" fill="none" stroke="#c9ced3"/><path d="M8 2.500h3.500V6zM2.500 5v3.500H6z" fill="#c9ced3"/></svg>
            <svg width="14" height="13" viewBox="0 0 14 13"><path d="M0 1.500h14M0 6.500h14M0 11.500h14" stroke="#e4e4e4" stroke-width="1.600"/></svg>
        </span>
    </div>

    <footer class="taskbar">
        <div class="apps">
            <span><svg width="15" height="14" viewBox="0 0 15 14"><path d="M0 2l6-1v5.500H0zM7 .8L15 0v6.500H7zM0 7.500h6V13l-6-1zM7 7.500h8V14l-8-1z" fill="#f4f4f4"/></svg></span>
            <span><svg width="20" height="20" viewBox="0 0 20 20"><circle cx="12" cy="8" r="6.500" fill="none" stroke="#fff" stroke-width="1.800"/><path d="M7.500 12.500L1 19" stroke="#fff" stroke-width="2.200"/></svg></span>
            <span><svg width="20" height="18" viewBox="0 0 20 18"><path d="M6 1h7l-3 12c-.5 2-1 3-3 3H3c-2 0-3-1.500-2-4L3 4c.5-2 1-3 3-3z" fill="#31a8ed"/><path d="M2 8l5-1-2 9H3c-2 0-3-1.500-2-4z" fill="#e3cf45"/><path d="M4 4h4l-1 6-5 1z" fill="#48bd6b"/><path d="M11 5c.5-2 1.500-3 3-3h3c2 0 3 1 2 4l-2 8c-.5 2-1.500 3-3 3H7c2 0 2.500-1 3-3z" fill="#c257d4"/><path d="M10 10h8l-1 4c-.5 2-1.500 3-3 3H7c2 0 2.500-1 3-3z" fill="#ef706a"/></svg></span>
            <span class="open"><svg width="19" height="16" viewBox="0 0 19 16"><path d="M0 0h8l1.500 2H18v13H0z" fill="#e9b64b"/><path d="M0 4h19v11H0z" fill="#fbd774"/><path d="M3 16V10.500C3 9 4 8.500 5 8.500h9c1.500 0 2 1 2 2V16h-3.500v-4h-6v4z" fill="#3e9ac8"/></svg></span>
            <span><svg width="20" height="20" viewBox="0 0 20 20"><circle cx="10" cy="10" r="9.800" fill="#178bd0"/><path d="M1 7C4-2 20-1 19.800 10c0 4-6 4-7.300 1.500C14 9 12 6 8 6 4 6 1.500 8 .5 11z" fill="#46cda0"/><path d="M.3 10C2 5 8 4.500 11 7.500 6 7 4 15 12 18c-5 4-12-1-11.700-8z" fill="#1477bd"/><path d="M12.500 11.500c-1 3.500 4 4 6.500 2-1 3-4 4.500-6 4.500-4-1-6-6-2-10 2 1 2 2.500 1.500 3.500z" fill="#253a3d"/><path d="M8 11c0 4 5 6.500 9.500 4.500C13 21 3 20 1 12z" fill="#1b6cb4"/></svg></span>
            <span><svg width="19" height="19" viewBox="0 0 19 19"><path d="M5 1h13v16H5z" fill="#f4f7fb" stroke="#9fb6d4"/><path d="M12 5h5M12 8h5M9 11h8M7 14h10" stroke="#4b70ad"/><path d="M1 3l10-1v11L1 12z" fill="#2c5aa5"/><path d="M1 3L4 1h8l-1 1z" fill="#8fb1de"/><text x="2" y="11" class="app-letter">W</text></svg></span>
            <span><b class="app pr">Pr</b></span>
            <span><svg width="20" height="20" viewBox="0 0 20 20"><path d="M3 4l2 1c2-2 3-1 5-3l2-2c1 3 2 4 4 5l1-1c3 4 3 8 1 11-3 6-13 6-16 0-2-4-1-8 1-11z" fill="#ff9b25"/><path d="M2 9c2 9 9 10 15 4-1 8-14 10-16 1z" fill="#f13e49"/><circle cx="10" cy="10" r="4.200" fill="#7b45cd"/><path d="M3 7c3-2 5 0 8 0-1 2-3 1-4 3 0 3 5 4 7 1 0 5-7 6-10 2z" fill="#ff6c29"/><path d="M12 0c1 3 2 4 4 5 2 3 2 5 1 8 0-5-5-6-7-9z" fill="#ffd33c"/></svg></span>
            <span><svg width="19" height="18" viewBox="0 0 19 18"><path d="M6 2l12-1-4 15L1 14z" fill="#a4dbe2"/><path d="M6 2l12-1-1 3-12 1z" fill="#e5f3f4"/><path d="M1 14l13 2 4-15v12l-3 4z" fill="#4b8892"/><path d="M10 7l5-1-2 8-9-1z" fill="#69bac7"/></svg></span>
            <span><svg width="22" height="20" viewBox="0 0 22 20"><use href="#chrome" width="20" height="20"/><circle cx="16.500" cy="14.500" r="5" fill="#5a26a8"/><path d="M14.500 16.500v-3l2 1.500 2-1.500v3" fill="none" stroke="#fff"/></svg></span>
            <span><svg width="18" height="18" viewBox="0 0 18 18"><rect width="18" height="18" rx="2" fill="#f6f5f2"/><path d="M0 12C0 5 3 2 8 1v7c-3 0-5 2-8 4z" fill="#2c9b3c"/><path d="M8 1l9 12c-2 3-6 4-8 4z" fill="#d5211f"/></svg></span>
            <span><svg width="20" height="20"><use href="#chrome"/></svg></span>
            <span><svg width="19" height="19" viewBox="0 0 19 19"><path d="M1 1h17v17H1z" fill="#eaf4e5" stroke="#9fc595"/><path d="M14 3h3v2h-3zM14 6h3v2h-3zM14 9h3v2h-3zM3 13h4v2H3zM8 13h4v2H8zM13 13h4v2h-4z" fill="#65ad55"/><path d="M1 3l12-1v10L1 11z" fill="#e9f5e3"/><path d="M4 3l6 7M10 3l-6 7" stroke="#26712f" stroke-width="2.200"/></svg></span>
            <span><svg width="20" height="20" viewBox="0 0 20 20"><circle cx="10" cy="10" r="9.800" fill="#050505"/><path d="M11 4v8a2.500 2.500 0 1 1-2.500-2.500M11 4c.3 2 2 3.500 4 3.500" fill="none" stroke="#38d9de" stroke-width="2"/><path d="M11.500 4.500v8A2.500 2.500 0 1 1 9 10M11.500 4.500c.3 2 2 3.500 3.500 3.500" fill="none" stroke="#fff" stroke-width="1.800"/></svg></span>
            <span><b class="app insta"><svg width="14" height="14" viewBox="0 0 14 14"><rect x="1" y="1" width="12" height="12" rx="3" fill="none" stroke="#fff" stroke-width="1.500"/><circle cx="7" cy="7" r="3" fill="none" stroke="#fff" stroke-width="1.500"/><circle cx="10.500" cy="3.500" r=".9" fill="#fff"/></svg></b></span>
            <span><b class="app linkedin">in</b></span>
            <span class="open"><svg width="21" height="20" viewBox="0 0 21 20"><use href="#chrome" width="20" height="20"/><circle cx="15.500" cy="14" r="5" fill="#b8c99a"/><path d="M11 13c3-4 6-3 9 0l-3 2-2 4-1-4z" fill="#556849"/></svg></span>
            <span class="recorder"><b class="app purple"><svg width="12" height="10" viewBox="0 0 12 10"><path d="M1 0l5 5-5 5z" fill="#fff"/><path d="M11 0L5 5l6 5z" fill="#d8c4f4"/></svg></b></span>
            <span class="current"><b class="app cad"><svg width="15" height="16" viewBox="0 0 22 26"><path d="M7 1h8l7 24h-6l-1.500-4.500L7 22l-1 3H0z" fill="#b51f2e"/><path d="M10.500 7l2.500 8-5.500 2z" fill="#efe6e4"/><path d="M0 25L7 1h4L5 22z" fill="#841523"/></svg></b></span>
        </div>
        <div class="tray">
            <svg width="10" height="6" viewBox="0 0 10 6"><path d="M.5 5.500L5 1l4.500 4.500" fill="none" stroke="#e4e4e4" stroke-width="1.200"/></svg>
            <svg width="9" height="13" viewBox="0 0 9 13"><rect x="2" y="0" width="5" height="9" rx="1.500" fill="#f4f4f4"/><path d="M.5 7v3h8V7M4.500 10v3M2 12.500h5" fill="none" stroke="#d4d8dc"/></svg>
            <svg width="13" height="8" viewBox="0 0 13 8"><path d="M.5.5h10.500v7H.5z" fill="none" stroke="#e4e4e4"/><path d="M2 2h7v4H2zM11 2.500h2v3h-2z" fill="#f4f4f4"/></svg>
            <svg width="10" height="12" viewBox="0 0 10 12"><rect x=".5" y="3" width="6" height="6" rx="1" fill="none" stroke="#e4e4e4"/><path d="M6.500 5l3-1.500v5L6.500 7M1 1.500C3 0 6 0 8 1.500M1 10.500c2 1.500 5 1.500 7 0" fill="none" stroke="#e4e4e4"/></svg>
            <div class="clock"><span>10:17 AM</span><span>1/24/2026</span></div>
            <div class="notice"><svg width="14" height="14" viewBox="0 0 14 14"><path d="M0 0h14v10H7l-3 3.500V10H0z" fill="#f4f4f4"/><path d="M2 3h10M2 5h10M2 7h7" stroke="#33414e" stroke-width=".8"/></svg><b>6</b></div>
        </div>
    </footer>
</body>
</html>
```
FILE: styles.css
```css
* {
    box-sizing: border-box;
}
body {
    margin: 0;
    width: 1280px;
    height: 720px;
    overflow: hidden;
    background-color: #222b30;
    color: #dcdfe2;
    font-family: "Noto Sans", "Open Sans", sans-serif;
    font-size: 10.5px;
    letter-spacing: -0.5px;
    line-height: 14px;
    white-space: nowrap;
}
svg {
    display: block;
    flex: none;
}
.defs {
    position: absolute;
}
.caret {
    flex: none;
    border: 2px solid transparent;
    border-top: 2.5px solid #e4e4e4;
    border-bottom: 0;
}
.caret.dim {
    border-top-color: #7b8388;
}
.caret.up {
    border-top: 0;
    border-bottom: 2.5px solid #444;
}
.tri {
    flex: none;
    border: 3px solid transparent;
    border-top: 4px solid #e0e3e5;
    border-bottom: 0;
}
.minimize {
    width: 7px;
    height: 2px;
    background-color: #e4e4e4;
}

/* title and menu */
.header {
    display: flex;
    height: 37px;
    border-bottom: 1px solid #39434a;
}
.logo {
    margin: 3px 9px 0 5px;
}
.header-main {
    flex: 1;
}
.titlebar {
    display: flex;
    align-items: center;
    height: 18px;
}
.quick {
    display: grid;
    grid-template-columns: repeat(8, 20px) 9px 20px 9px 16px;
    justify-items: center;
    align-items: center;
    width: 400px;
    padding-left: 1px;
}
.doc-title {
    display: flex;
    gap: 11px;
    width: 402px;
    padding-top: 1px;
    color: #e0e2e4;
}
.doc-title span:first-child {
    letter-spacing: -0.54px;
}
.arrow-right {
    border: 3px solid transparent;
    border-left: 4px solid #e4e4e4;
    border-right: 0;
    margin-right: 5px;
}
.search {
    width: 149px;
    height: 17px;
    padding-left: 2px;
    background-color: #434d5b;
    color: #b5bbc2;
    font-style: italic;
    letter-spacing: -0.68px;
    font-size: 11px;
    line-height: 16px;
}
.account {
    display: flex;
    align-items: center;
    gap: 6px;
    width: 107px;
    padding-left: 4px;
    letter-spacing: -0.5px;
}
.account span {
    margin-left: -1px;
}
.services {
    display: grid;
    grid-template-columns: 14px 21px 19px 12px 10px 18px 14px;
    justify-items: center;
    align-items: center;
    width: 120px;
    margin: 0 2px 0 -1px;
}
.vline {
    width: 1px;
    height: 14px;
    background-color: #4a545a;
}
.help {
    width: 14px;
    height: 14px;
    border-radius: 50%;
    background-color: #dcdcdc;
    color: #30393e;
    font-weight: bold;
    letter-spacing: 0;
    text-align: center;
}
.window-buttons {
    display: flex;
    align-items: center;
    gap: 11px;
    padding-left: 1px;
}
.window-buttons .minimize,
.doc-buttons .minimize {
    margin-top: 7px;
}
.menubar {
    display: flex;
    justify-content: space-between;
    align-items: center;
    height: 19px;
    padding: 1px 1px 0 7px;
    color: #a9b0b4;
    letter-spacing: -0.35px;
}
.menu {
    display: grid;
    grid-template-columns: 33px 34px 39px 41px 49px 41.5px 40.5px 65px 48px 65px 54px 39px 40px;
}
.doc-buttons {
    display: flex;
    align-items: center;
    gap: 4px;
}

/* ribbon */
.ribbon-tabs {
    display: grid;
    grid-template-columns: 43px 40px 57.5px 62px 38px 52px 46.500px 50.500px 68px 75px 88.500px 30px;
    height: 16px;
    padding-left: 2px;
    color: #b5bbc0;
    line-height: 17px;
}
.ribbon-tabs span {
    padding-left: 8px;
}
.ribbon-tabs .active {
    padding-left: 7px;
    border-radius: 2px 2px 0 0;
    background-color: #3b4450;
    color: #e8eaec;
}
.ribbon-toggle {
    display: flex;
    align-items: center;
    gap: 3px;
    padding-left: 8px;
}
.ribbon-toggle b {
    display: flex;
    justify-content: center;
    align-items: center;
    flex: none;
    width: 13px;
    height: 6px;
    background-color: #f0f0f0;
}
.ribbon {
    display: grid;
    grid-template-columns: 185px 211px 141px 227px 67px 184px 57px 81px 66px 61px;
    height: 82px;
    background-color: #3b4450;
}
.panel {
    display: flex;
    flex-direction: column;
    border-right: 1px solid #2b343d;
}
.panel:last-child {
    border-right: 0;
}
.panel-body {
    display: grid;
    align-items: start;
    height: 66px;
    padding-top: 3px;
}
.panel-title {
    display: flex;
    justify-content: center;
    align-items: center;
    gap: 6px;
    height: 16px;
    padding: 1px 3px 0 0;
    letter-spacing: -0.4px;
}
.big {
    display: flex;
    flex-direction: column;
    align-items: center;
    padding-top: 1px;
}
.big label {
    margin-top: 1px;
    line-height: 13.5px;
    text-align: center;
}
.big .caret {
    margin-top: 2px;
}
.glyph {
    height: 30px;
    font-size: 32px;
    font-weight: 500;
    letter-spacing: 0;
    line-height: 29px;
}
.small-col {
    display: grid;
    grid-auto-rows: 20.500px;
}
.cmd {
    display: flex;
    align-items: center;
    gap: 4px;
}
.cmd > .caret {
    margin-left: 2px;
}
.draw .panel-body {
    grid-template-columns: 35px 36px 46px 31px 30px;
}
.draw .small-col {
    padding-left: 4px;
}
.modify .panel-body {
    grid-template-columns: 60px 59px 63px 20px;
    padding-left: 5px;
    letter-spacing: -0.45px;
}
.modify .cmd {
    gap: 3.5px;
}
.modify .wide .cmd {
    width: 52px;
}
.modify .wide .caret {
    margin-left: auto;
}
.annotation .panel-body {
    grid-template-columns: 39px 48px 50px;
}
.annotation .small-col {
    padding-left: 5px;
}
.layer .panel-body {
    grid-template-columns: 51px 173px;
}
.block .panel-body {
    grid-template-columns: 35px 30px;
}
.props .panel-body {
    grid-template-columns: 51px 18px 112px;
}
.groups .panel-body {
    grid-template-columns: 34px 20px;
}
.groups .cmd {
    justify-content: center;
    width: 20px;
}
.groups .on {
    border: 1px solid #6fb3dc;
    background-color: #35566c;
}
.utilities .panel-body {
    grid-template-columns: 59px 20px;
}
.clipboard .panel-body {
    grid-template-columns: 44px 20px;
}
.clipboard .panel-title {
    padding-right: 0;
}
.view .panel-body {
    padding-top: 8px;
}
.view .big {
    width: 50px;
}
.launcher {
    margin-left: auto;
}
.props .panel-title {
    padding: 1px 2px 0 58px;
    justify-content: flex-start;
}
.view .panel-title {
    padding: 1px 13px 0 4px;
    justify-content: flex-start;
}
.combo {
    display: flex;
    align-items: center;
    height: 18px;
    padding-right: 1px;
    background-color: #465160;
    border: 1px solid #353e49;
}
.combo .tri {
    margin-left: auto;
}
.swatch {
    width: 12px;
    height: 12px;
    background-color: #fff;
    border: 1px solid #222;
}
.layer-combo {
    gap: 3.5px;
    height: 19px;
    padding-left: 4px;
}
.layer-combo span {
    margin-left: 1px;
}
.layer-row {
    display: grid;
    grid-template-columns: repeat(5, 20px) 70px;
    align-items: center;
    height: 20.5px;
    padding-left: 2px;
}
.layer-tools .combo + .layer-row {
    margin-top: 1px;
}
.layer-row span {
    margin-left: -2px;
    letter-spacing: -0.7px;
    font-size: 10.75px;
}
.combos {
    display: grid;
    gap: 2px;
    padding-top: 2px;
}
.combos .swatch {
    width: 13px;
    height: 13px;
    margin: 0 7px 0 8px;
}
.combo hr {
    width: 53px;
    margin: 0 2px 0 1px;
    border: 0;
    border-top: 1px solid #d4d8dc;
}

/* file tabs */
.file-tabs {
    display: flex;
    align-items: flex-end;
    height: 25px;
    padding-left: 14px;
    border-bottom: 2px solid #3b4350;
}
.file-tab {
    display: flex;
    align-items: center;
    width: 110px;
    height: 20px;
    margin-right: -7px;
    padding: 0 15px 0 12px;
    background-color: #2e3741;
    clip-path: polygon(9px 0, 101px 0, 105px 3px, 110px 20px, 0 20px, 5px 3px);
    color: #b5bbc0;
    letter-spacing: -0.4px;
}
.file-tab svg:last-child {
    margin-left: auto;
}
.file-tab.active {
    gap: 2px;
    padding: 0 16px 0 11px;
    background-color: #3b4350;
    color: #dfe2e5;
}
.add-tab {
    display: flex;
    justify-content: center;
    align-items: center;
    width: 24px;
    height: 15px;
    border-radius: 4px;
    background: linear-gradient(#c3c7ca, #c3c7ca) center / 8px 1.5px no-repeat, linear-gradient(#c3c7ca, #c3c7ca) center / 1.5px 8px no-repeat, #2e3741;
}
.file-tabs .add-tab {
    margin: 0 0 2px 7px;
    width: 18px;
}

/* drawing area */
.canvas {
    position: relative;
    height: 487px;
    background-color: #000;
}
.drawing {
    position: absolute;
    top: 0;
    left: 0;
}
.viewcube {
    position: absolute;
    top: 15px;
    left: 1181px;
    display: grid;
    grid-template-areas: ". n ." "w top e" ". s .";
    grid-template-columns: 24px 36px 24px;
    grid-template-rows: 24px 36px 24px;
    place-items: center;
    place-content: center;
    width: 84px;
    height: 84px;
    border: 8px solid #2b2b2b;
    border-radius: 50%;
    color: #b4b4b4;
    font: bold 14px/14px "Liberation Sans", sans-serif;
    letter-spacing: 0;
}
.viewcube b:nth-child(1) {
    grid-area: n;
    margin-top: -18px;
}
.viewcube b:nth-child(2) {
    grid-area: w;
    margin-left: -18px;
}
.viewcube b:nth-child(4) {
    grid-area: e;
    margin-right: -18px;
}
.viewcube b:nth-child(5) {
    grid-area: s;
    margin-bottom: -18px;
}
.viewcube span {
    grid-area: top;
    width: 36px;
    height: 36px;
    background: radial-gradient(#8d9293 30%, #a6a9a9 75%);
    border: 1px solid #b4b6b6;
    color: #30363a;
    font: bold 9px/34px "Noto Sans", sans-serif;
    letter-spacing: -0.4px;
    text-align: center;
}
.wcs {
    position: absolute;
    top: 117px;
    left: 1204px;
    display: flex;
    align-items: center;
    justify-content: space-between;
    width: 38px;
    height: 14px;
    padding: 0 4px 0 2px;
    border: 1px solid #88868c;
    border-radius: 4px;
    background-color: #6e6c72;
    color: #29282b;
    font: 9.5px/12px "Liberation Sans", sans-serif;
    letter-spacing: -0.3px;
}
.wcs i {
    width: 4px;
    height: 4px;
    border: 1px solid #8f8d94;
}
.navbar {
    position: absolute;
    top: 151px;
    left: 1251px;
    height: 172px;
    border-radius: 2px;
    background-color: #3a3a3a;
}
.history {
    position: absolute;
    top: 415.5px;
    left: 309px;
    display: flex;
    flex-direction: column;
    align-items: flex-start;
    gap: 4px;
    font: 10px/13px "DejaVu Sans Mono", monospace;
    letter-spacing: 0;
}
.history span {
    height: 12.700px;
    padding: 0 1px;
    border-radius: 1px;
    background-color: #434343;
    color: #b0b0b0;
}
.history .last {
    background-color: #555;
    color: #f0f0f0;
}
.command-line {
    position: absolute;
    top: 465px;
    left: 257px;
    display: flex;
    width: 765px;
    height: 22px;
}
.command-tools {
    display: flex;
    align-items: center;
    gap: 4px;
    width: 47px;
    padding-left: 4px;
    background-color: #20272e;
}
.grip {
    flex: none;
    width: 4px;
    height: 15px;
    border: 1px dotted #a0a6ab;
    border-width: 0 1px;
}
.command-tools svg:last-child {
    margin-left: 5px;
}
.command-input {
    display: flex;
    align-items: center;
    flex: 1;
    padding: 0 4px 0 3px;
    border: 1px solid #c0c0c0;
    border-radius: 1px;
    background-color: #b2b2b2;
    color: #585858;
    font: 10px/13px "DejaVu Sans Mono", monospace;
    letter-spacing: 0;
}
.command-input .tri {
    margin: 0 5px 0 1px;
    border-top-color: #747474;
}
.command-input .up {
    margin: 0 0 0 auto;
    border-top: 0;
    border-bottom: 4px solid #444;
}

/* layout tabs and status bar */
.layout-tabs {
    display: flex;
    height: 17px;
    padding-left: 7px;
    color: #b1b7bb;
    line-height: 17px;
}
.layout-tabs span {
    width: 52px;
    height: 15px;
    background-color: #2d363e;
    clip-path: polygon(0 0, 100% 0, calc(100% - 6px) 100%, 6px 100%);
    text-align: center;
}
.layout-tabs .active {
    background-color: #3d4650;
    color: #fff;
    font-weight: bold;
}
.layout-tabs span:nth-child(3) {
    width: 55px;
}
.layout-tabs .add-tab {
    width: 20px;
    margin-left: 2px;
    background-color: #2d363e;
}
.statusbar {
    display: flex;
    align-items: flex-start;
    gap: 1px;
    height: 23px;
    padding: 1px 0 0 806px;
}
.cell {
    display: flex;
    justify-content: center;
    align-items: center;
    flex: none;
    width: 19px;
    height: 20px;
    background-color: #343d47;
    color: #f0f2f4;
}
.cell.on {
    background-color: #5689b5;
}
.cell.model {
    width: 39px;
    letter-spacing: -0.4px;
}
.cell.grid {
    gap: 8px;
    width: 54px;
    margin: 0 2px 0 1px;
}
.cell.polar {
    gap: 8px;
    width: 67px;
    padding-right: 2px;
}
.cell.osnap {
    width: 14px;
    margin-right: 1px;
    padding-right: 2px;
}
.cell.annoscale {
    gap: 6px;
    width: 67px;
    padding-right: 2px;
}
.annoscale span {
    margin-left: 2px;
    letter-spacing: -0.4px;
}
.cell.gear {
    gap: 7px;
    width: 34px;
    padding-right: 1px;
}
.cell.plus {
    width: 19px;
}
.cell.shapes {
    width: 21px;
}
.cell.custom {
    gap: 6px;
    width: 43px;
    margin-left: 2px;
}

/* taskbar */
.taskbar {
    display: flex;
    height: 33px;
    background: linear-gradient(90deg, #263b3e, #22373d 45%, #1d2e3f 70%, #1c293c);
}
.apps {
    display: grid;
    grid-template-columns: repeat(19, 41.33px);
    width: 1105px;
    margin-left: -1px;
}
.apps span {
    display: flex;
    justify-content: center;
    align-items: center;
    margin: 0 3px;
}
.apps .open {
    border-bottom: 2px solid #76b9e6;
    padding-top: 2px;
}
.apps .recorder {
    border-bottom: 2px solid #f3f500;
    padding-top: 2px;
    background: linear-gradient(90deg, #869340 40%, #465b5e 40%);
}
.apps .current {
    margin: 0 0 0 1px;
    padding-top: 2px;
    border-bottom: 2px solid #76b9e6;
    background-color: #4c6169;
}
.app {
    display: flex;
    justify-content: center;
    align-items: center;
    width: 19px;
    height: 19px;
    border-radius: 3px;
}
.pr {
    background-color: #00005c;
    color: #b5a9ff;
    letter-spacing: 0;
}
.app-letter {
    fill: #fff;
    font-size: 8px;
    font-weight: bold;
}
.insta {
    width: 20px;
    height: 20px;
    border-radius: 5px;
    background: radial-gradient(circle at 30% 100%, #fdc150 15%, #f0533b 45%, #c22c8c 70%, #7642c7);
}
.linkedin {
    width: 18px;
    height: 18px;
    border-radius: 1px;
    background-color: #1769ad;
    color: #fff;
    font-size: 14px;
}
.purple {
    border-radius: 1px;
    background-color: #5b1cc0;
}
.cad {
    width: 20px;
    height: 20px;
    border-radius: 0;
    background-color: #efe6e4;
}
.tray {
    display: grid;
    grid-template-columns: 12px 26px 17px 22px 54px 44px;
    align-items: center;
    justify-items: center;
}
.clock {
    display: flex;
    flex-direction: column;
    align-items: center;
    line-height: 15px;
    color: #f0f2f4;
    letter-spacing: -0.5px;
}
.notice {
    display: flex;
    width: 26px;
    margin-left: 4px;
}
.notice b {
    flex: none;
    width: 14px;
    height: 14px;
    margin: 6px 0 0 -7px;
    border: 1px solid #7d868e;
    border-radius: 50%;
    background-color: #2c3947;
    color: #fff;
    font-size: 9px;
    letter-spacing: 0;
    line-height: 12px;
    text-align: center;
}
```
